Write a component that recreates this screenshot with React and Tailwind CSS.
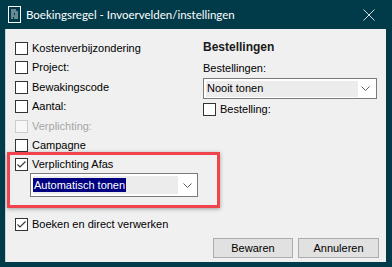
import React from 'react'

const font = { fontFamily: '"Liberation Sans", Arial, sans-serif' }

const Check = ({ checked, disabled }) => (
  <span
    className={`w-[13px] h-[13px] shrink-0 border flex items-center justify-center ${
      disabled ? 'border-[#cccccc] bg-[#f7f7f7]' : 'border-[#333333] bg-white'
    }`}
  >
    {checked && (
      <svg width="11" height="11" viewBox="0 0 11 11">
        <path d="M1.5 5.5 L4 8 L9.5 2.5" fill="none" stroke="#333" strokeWidth="1.1" />
      </svg>
    )}
  </span>
)

const Row = ({ label, checked, disabled, className = 'h-[19.5px]' }) => (
  <div className={`flex items-center gap-[4px] ${className}`}>
    <Check checked={checked} disabled={disabled} />
    <span className={`text-[11px] leading-none ${disabled ? 'text-[#a6a6a6]' : 'text-black'}`}>
      {label}
    </span>
  </div>
)

const Chevron = () => (
  <svg width="9" height="5" viewBox="0 0 9 5">
    <path d="M0.5 0.5 L4.5 4.5 L8.5 0.5" fill="none" stroke="#606060" strokeWidth="1" />
  </svg>
)

const Button = ({ children, className }) => (
  <button
    className={`h-[20px] border border-[#adadad] bg-[#e1e1e1] text-[11px] text-black leading-none flex items-center justify-center ${className}`}
  >
    {children}
  </button>
)

const App = () => {
  return (
    <div className="w-[392px] h-[267px] bg-[#013b4a] flex flex-col overflow-hidden" style={font}>
      <div className="h-[29px] flex items-center pl-[8px] pr-[17px] shrink-0">
        <svg width="13" height="17" viewBox="0 0 13 17" className="shrink-0">
          <rect x="0.5" y="0.5" width="12" height="16" fill="none" stroke="#ffffff" />
          <path d="M3 4h5M3 6h7M3 8h3M7 8h3M3 10h7M3 12h2M6 12h4" stroke="#cfd8dc" strokeWidth="1" />
        </svg>
        <span
          className="ml-[5px] text-[11.5px] text-white leading-none"
          style={{ fontFamily: 'Lato, "Noto Sans", sans-serif' }}
        >
          Boekingsregel - Invoervelden/instellingen
        </span>
        <svg width="12" height="12" viewBox="0 0 12 12" className="ml-auto">
          <path d="M0.5 0.5 L11.5 11.5 M11.5 0.5 L0.5 11.5" stroke="#d7dde0" strokeWidth="1" />
        </svg>
      </div>

      <div className="ml-[5px] mr-[6px] h-[233px] bg-[#f0f0f0] border-l border-[#c8d0d4] relative flex flex-col">
        <div className="flex flex-1">
          <div className="w-[197px] pl-[9px] pt-[9.5px] flex flex-col">
            <Row label="Kostenverbijzondering" />
            <Row label="Project:" />
            <Row label="Bewakingscode" />
            <Row label="Aantal:" />
            <Row label="Verplichting:" disabled />
            <Row label="Campagne" />
            <Row label="Verplichting Afas" checked className="h-[17.5px]" />
            <div className="ml-[15px] w-[168px] h-[24px] border border-[#7a7a7a] bg-white flex items-center pl-[2px] pr-[5px]">
              <div className="w-[145px] h-[18px] bg-[#ececec] flex items-center">
                <span className="bg-[#000080] text-white text-[11px] leading-none h-[14px] px-[1px] flex items-center">
                  Automatisch tonen
                </span>
              </div>
              <div className="ml-auto">
                <Chevron />
              </div>
            </div>
            <Row label="Boeken en direct verwerken" checked className="h-[19.5px] mt-[18px]" />
          </div>

          <div className="flex-1 pt-[11px] flex flex-col">
            <div className="text-[12px] font-bold text-[#1a1a1a] leading-none h-[14px] flex items-center">
              Bestellingen
            </div>
            <div className="mt-[8px] text-[11px] text-black leading-none h-[13px] flex items-center">
              Bestellingen:
            </div>
            <div className="mt-[3px] w-[174px] h-[21px] border border-[#7a7a7a] bg-white flex items-center pl-[2px] pr-[6px]">
              <div className="w-[152px] h-[16px] bg-[#ececec] flex items-center pl-[1px]">
                <span className="text-[11px] text-black leading-none">Nooit tonen</span>
              </div>
              <div className="ml-auto">
                <Chevron />
              </div>
            </div>
            <Row label="Bestelling:" className="h-[19px] mt-[1px]" />
          </div>
        </div>

        <div className="flex justify-end gap-[5px] pr-[7px] pb-[4px]">
          <Button className="w-[80px]">Bewaren</Button>
          <Button className="w-[81px]">Annuleren</Button>
        </div>

        <div className="absolute left-[1px] top-[123px] w-[213px] h-[56px] border-[3px] border-[#f0434b] shadow-[0_1px_4px_rgba(0,0,0,0.35)] pointer-events-none" />
      </div>
    </div>
  )
}

export default App
